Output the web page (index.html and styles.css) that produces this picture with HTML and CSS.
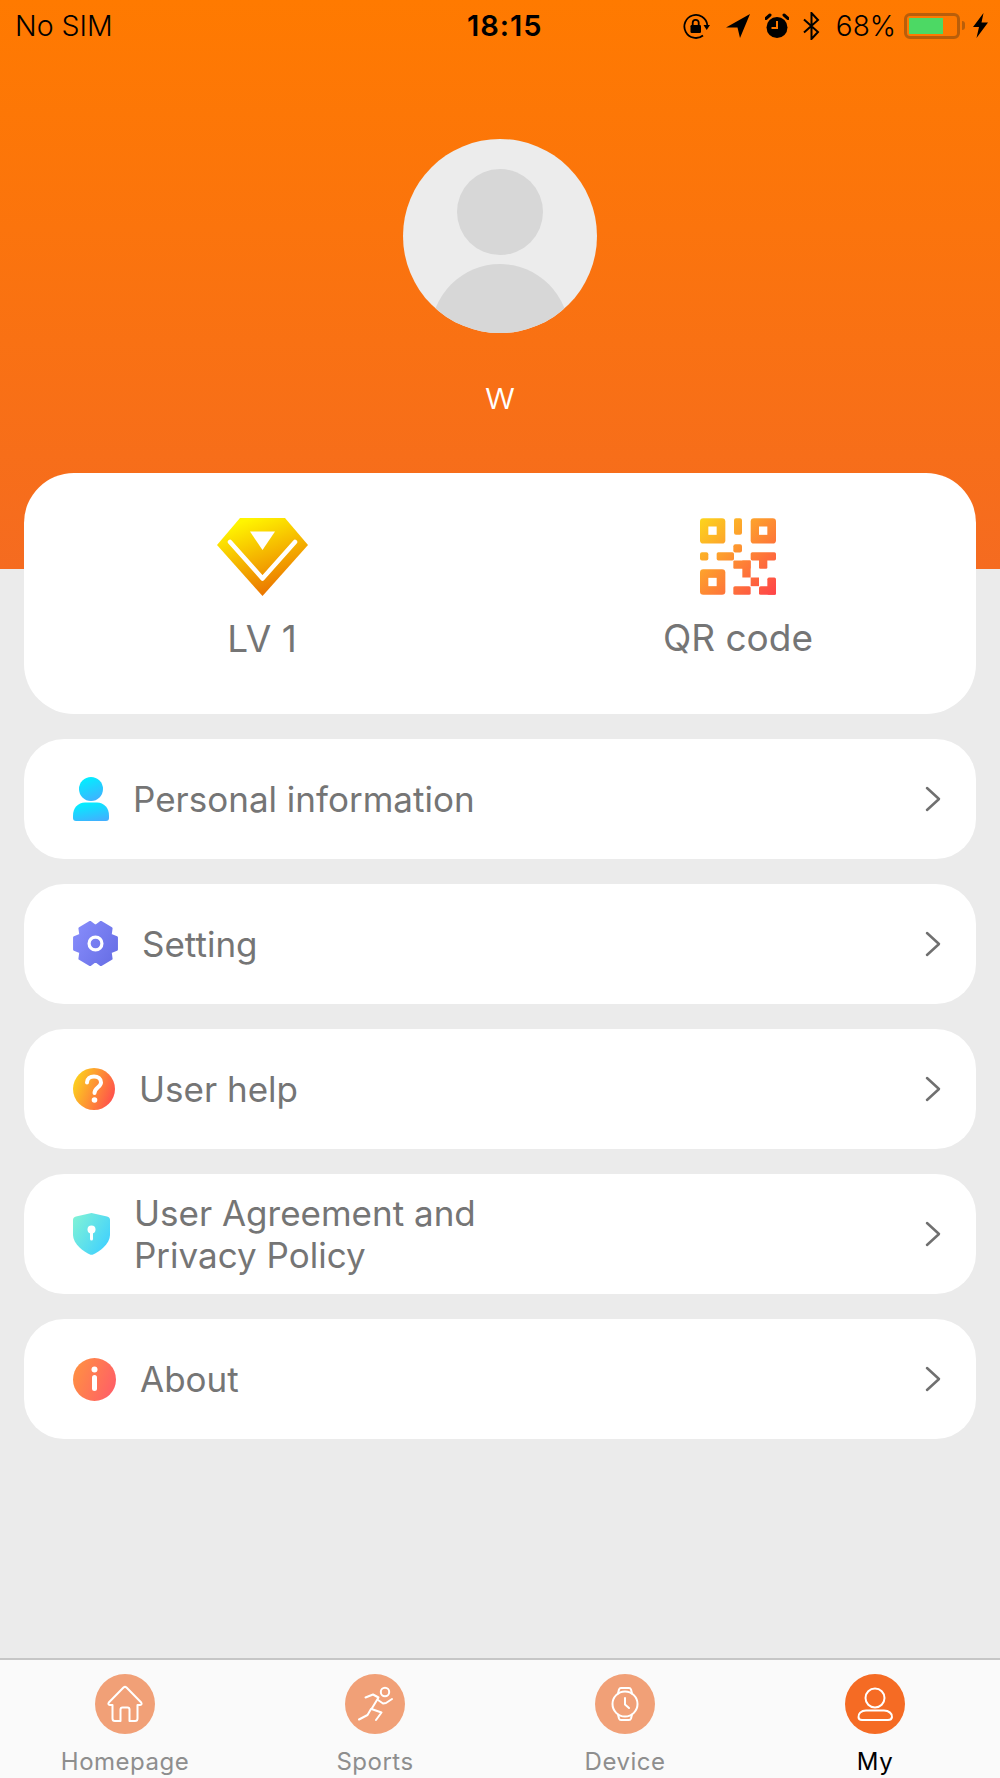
FILE: index.html
```html
<!DOCTYPE html>
<html lang="en">
<head>
    <meta charset="UTF-8">
    <meta name="viewport" content="width=device-width, initial-scale=1.0">
    <title>My</title>
    <link rel="stylesheet" href="styles.css">
</head>
<body>

    <svg class="defs" width="0" height="0" aria-hidden="true">
        <defs>
            <linearGradient id="grad-gem" x1="0.25" y1="0" x2="0.7" y2="1">
                <stop offset="0.05" stop-color="#fff500"/>
                <stop offset="1" stop-color="#e96a00"/>
            </linearGradient>
            <linearGradient id="grad-qr" gradientUnits="userSpaceOnUse" x1="0" y1="0" x2="228" y2="230">
                <stop offset="0" stop-color="#fcd51c"/>
                <stop offset="1" stop-color="#ff4349"/>
            </linearGradient>
            <linearGradient id="grad-person" x1="0.3" y1="0" x2="0.7" y2="1">
                <stop offset="0" stop-color="#00f0ff"/>
                <stop offset="1" stop-color="#41b0ff"/>
            </linearGradient>
            <linearGradient id="grad-gear" x1="0" y1="0.2" x2="1" y2="0.8">
                <stop offset="0" stop-color="#858bfa"/>
                <stop offset="1" stop-color="#686fe6"/>
            </linearGradient>
            <linearGradient id="grad-help" x1="0" y1="0.3" x2="1" y2="0.7">
                <stop offset="0" stop-color="#fcd31c"/>
                <stop offset="1" stop-color="#ff4d4d"/>
            </linearGradient>
            <linearGradient id="grad-shield" x1="0" y1="0.1" x2="1" y2="0.8">
                <stop offset="0" stop-color="#80f2d6"/>
                <stop offset="1" stop-color="#3fd0ff"/>
            </linearGradient>
            <linearGradient id="grad-info" x1="0" y1="0.3" x2="1" y2="0.7">
                <stop offset="0" stop-color="#ff8f43"/>
                <stop offset="1" stop-color="#ff5f67"/>
            </linearGradient>
            <clipPath id="avatar-clip"><circle cx="97" cy="97" r="97"/></clipPath>
        </defs>
    </svg>

    <header class="hero">
        <div class="status-bar">
            <span class="status-carrier">No SIM</span>
            <span class="status-time">18:15</span>
            <div class="status-right">
                <svg class="st-lock" width="27" height="26" viewBox="0 0 27 26">
                    <path d="M20 22.500A11.500 11.500 0 1 1 24.300 12" fill="none" stroke="#000" stroke-width="1.800"/>
                    <path d="M20.500 12L27 12 23.700 17z" fill="#000"/>
                    <rect x="7.500" y="12" width="10.500" height="8" rx="1.200" fill="#000"/>
                    <path d="M9.700 12.500V9.800a3 3 0 0 1 6 0V12.500" fill="none" stroke="#000" stroke-width="1.800"/>
                </svg>
                <svg class="st-arrow" width="24" height="24" viewBox="0 0 24 24"><path d="M24 0L0 13.500l11.500 0L14 24z" fill="#000"/></svg>
                <svg class="st-alarm" width="24" height="26" viewBox="0 0 24 26">
                    <circle cx="12" cy="14.500" r="10.500" fill="#000"/>
                    <path d="M12 8v7H6.500" fill="none" stroke="#ff7a00" stroke-width="2"/>
                    <path d="M1 5.500L5 2M23 5.500L19 2" stroke="#000" stroke-width="3" stroke-linecap="round"/>
                </svg>
                <svg class="st-bt" width="17" height="28" viewBox="0 0 17 28"><path d="M1 7.500L15 20 8.500 27V1L15 8 1 20.500" fill="none" stroke="#000" stroke-width="2"/></svg>
                <span class="status-pct">68%</span>
                <div class="battery">
                    <div class="battery-level"></div>
                </div>
                <div class="battery-nub"></div>
                <svg class="st-bolt" width="15" height="25" viewBox="0 0 15 25"><path d="M10.500 0L0 14h6L3.500 25 15 9.500H8.500z" fill="#000"/></svg>
            </div>
        </div>

        <svg class="avatar" width="194" height="194" viewBox="0 0 194 194">
            <circle cx="97" cy="97" r="97" fill="#ececec"/>
            <circle cx="97" cy="73" r="43" fill="#d7d7d7"/>
            <circle cx="97" cy="194" r="69" fill="#d7d7d7" clip-path="url(#avatar-clip)"/>
        </svg>
        <div class="user-name">w</div>
    </header>

    <main class="content">
        <section class="top-card">
            <div class="top-item">
                <svg width="91" height="78" viewBox="0 0 91 78">
                    <path d="M23 0H68L91 27 45.500 78 0 27z" fill="url(#grad-gem)"/>
                    <path d="M33 13.500H58L45.500 32z" fill="#fff"/>
                    <path d="M13 24L45.500 60.500 78 24" fill="none" stroke="#fff" stroke-width="4.500" stroke-linecap="round" stroke-linejoin="round"/>
                </svg>
                <span>LV 1</span>
            </div>
            <div class="top-item">
                <svg width="76" height="77" viewBox="0 0 228 230">
                    <g fill="url(#grad-qr)">
                        <rect x="0" y="0" width="76" height="76" rx="10"/>
                        <rect x="152" y="0" width="76" height="76" rx="10"/>
                        <rect x="0" y="153" width="76" height="77" rx="10"/>
                        <rect x="102" y="0" width="24" height="50" rx="6"/>
                        <rect x="100" y="78" width="26" height="25" rx="6"/>
                        <rect x="0" y="102" width="25" height="25" rx="6"/>
                        <rect x="50" y="102" width="52" height="25" rx="5"/>
                        <rect x="152" y="102" width="76" height="25" rx="5"/>
                        <rect x="100" y="127" width="52" height="25" rx="3"/>
                        <rect x="177" y="120" width="25" height="32" rx="4"/>
                        <rect x="127" y="127" width="25" height="51"/>
                        <rect x="152" y="178" width="25" height="26"/>
                        <rect x="100" y="204" width="52" height="26" rx="5"/>
                        <rect x="177" y="204" width="51" height="26" rx="5"/>
                        <rect x="202" y="178" width="26" height="52" rx="5"/>
                    </g>
                    <g fill="#fff">
                        <rect x="25" y="25" width="25" height="25"/>
                        <rect x="177" y="25" width="25" height="25"/>
                        <rect x="25" y="179" width="25" height="25"/>
                    </g>
                </svg>
                <span>QR code</span>
            </div>
        </section>

        <a class="menu-row">
            <svg width="36" height="44" viewBox="0 0 36 44">
                <circle cx="18" cy="12" r="12" fill="url(#grad-person)"/>
                <path d="M12 25.500H24C31 25.500 36 31 36 38.500V41Q36 44 33 44H3Q0 44 0 41V38.500C0 31 5 25.500 12 25.500Z" fill="url(#grad-person)"/>
            </svg>
            <span>Personal information</span>
            <svg class="chevron" width="16" height="26" viewBox="0 0 16 26"><path d="M2 2L14 13 2 24" fill="none" stroke="#707070" stroke-width="2.500" stroke-linecap="round" stroke-linejoin="round"/></svg>
        </a>

        <a class="menu-row">
            <svg width="45" height="45" viewBox="1 1 42 42">
                <path d="M41.700 16.340V27.660L35.860 30 36.700 36.200 26.960 41.900 22 38 17.040 41.900 7.300 36.200 8.140 30 2.300 27.660V16.340L8.140 14 7.300 7.800 17.040 2.100 22 6 26.960 2.100 36.700 7.800 35.860 14z" fill="url(#grad-gear)" stroke="url(#grad-gear)" stroke-width="2.500" stroke-linejoin="round"/>
                <circle cx="22" cy="22" r="6" fill="none" stroke="#fff" stroke-width="3"/>
            </svg>
            <span>Setting</span>
            <svg class="chevron" width="16" height="26" viewBox="0 0 16 26"><path d="M2 2L14 13 2 24" fill="none" stroke="#707070" stroke-width="2.500" stroke-linecap="round" stroke-linejoin="round"/></svg>
        </a>

        <a class="menu-row">
            <svg width="42" height="42" viewBox="0 0 42 42">
                <circle cx="21" cy="21" r="21" fill="url(#grad-help)"/>
                <path d="M14 14.500C14 10.500 17 8.500 21 8.500 25 8.500 28 10.800 28 14.500 28 19 21.500 19.500 21.500 25" fill="none" stroke="#fff" stroke-width="4" stroke-linecap="round"/>
                <circle cx="21.500" cy="32" r="2.800" fill="#fff"/>
            </svg>
            <span>User help</span>
            <svg class="chevron" width="16" height="26" viewBox="0 0 16 26"><path d="M2 2L14 13 2 24" fill="none" stroke="#707070" stroke-width="2.500" stroke-linecap="round" stroke-linejoin="round"/></svg>
        </a>

        <a class="menu-row">
            <svg width="37" height="42" viewBox="0 0 37 42">
                <path d="M18.500 0L34 3.500Q37 4.300 37 7V22C37 31 26 39 19.500 41.700Q18.500 42 17.500 41.700C11 39 0 31 0 22V7Q0 4.300 3 3.500z" fill="url(#grad-shield)"/>
                <circle cx="18.500" cy="16.500" r="4" fill="#fff"/>
                <rect x="17" y="17" width="3" height="10.500" rx="1.500" fill="#fff"/>
            </svg>
            <span>User Agreement and<br>Privacy Policy</span>
            <svg class="chevron" width="16" height="26" viewBox="0 0 16 26"><path d="M2 2L14 13 2 24" fill="none" stroke="#707070" stroke-width="2.500" stroke-linecap="round" stroke-linejoin="round"/></svg>
        </a>

        <a class="menu-row">
            <svg width="43" height="43" viewBox="0 0 43 43">
                <circle cx="21.500" cy="21.500" r="21.500" fill="url(#grad-info)"/>
                <circle cx="21.500" cy="11.500" r="3" fill="#fff"/>
                <rect x="19" y="17" width="5" height="16" rx="2.500" fill="#fff"/>
            </svg>
            <span>About</span>
            <svg class="chevron" width="16" height="26" viewBox="0 0 16 26"><path d="M2 2L14 13 2 24" fill="none" stroke="#707070" stroke-width="2.500" stroke-linecap="round" stroke-linejoin="round"/></svg>
        </a>
    </main>

    <nav class="tab-bar">
        <div class="tab">
            <div class="tab-icon">
                <svg width="60" height="60" viewBox="0 0 60 60"><path d="M28.500 13.500L13.800 28.500Q12.500 30.500 15 31H17.500V44.500Q17.500 47 20 47H25.500V35.500Q25.500 33.500 27.500 33.500H32.500Q34.500 33.500 34.500 35.500V47H40Q42.500 47 42.500 44.500V31H45Q47.500 30.500 46.200 28.500L31.500 13.500Q30 12.300 28.500 13.500Z"/></svg>
            </div>
            <span>Homepage</span>
        </div>
        <div class="tab">
            <div class="tab-icon">
                <svg width="60" height="60" viewBox="0 0 60 60">
                    <circle cx="40" cy="18" r="4.200"/>
                    <path d="M20.500 23.500L28 20.500 33.500 23.500 26.500 35 36.500 38.500 31 46"/>
                    <path d="M26 35L22.500 41 14 45.500"/>
                    <path d="M33 26L38 29.500 41 29 47 25"/>
                </svg>
            </div>
            <span>Sports</span>
        </div>
        <div class="tab">
            <div class="tab-icon">
                <svg width="60" height="60" viewBox="0 0 60 60">
                    <circle cx="30" cy="30" r="12.500"/>
                    <path d="M23 19.500L24 15.500Q24.500 14 26 14H34Q35.500 14 36 15.500L37 19.500"/>
                    <path d="M23 40.500L24 44.500Q24.500 46 26 46H34Q35.500 46 36 44.500L37 40.500"/>
                    <path d="M30 24V30.500L34 34"/>
                </svg>
            </div>
            <span>Device</span>
        </div>
        <div class="tab tab-active">
            <div class="tab-icon">
                <svg width="60" height="60" viewBox="0 0 60 60">
                    <circle cx="30" cy="24" r="9.500"/>
                    <path d="M21 36.500H39C44 36.500 47.500 40 47 43Q46.500 46 43 46H17Q13.500 46 13.500 43C13 40 16 36.500 21 36.500Z"/>
                </svg>
            </div>
            <span>My</span>
        </div>
    </nav>

</body>
</html>
```

FILE: styles.css
```css
* {
    box-sizing: border-box;
}

html, body {
    height: 100%;
}

body {
    margin: 0;
    height: 1778px;
    overflow: hidden;
    display: flex;
    flex-direction: column;
    background-color: #ebebeb;
    font-family: 'Inter', 'Liberation Sans', sans-serif;
    color: #757575;
}

.defs {
    position: absolute;
}

/* orange header */
.hero {
    height: 569px;
    flex-shrink: 0;
    display: flex;
    flex-direction: column;
    align-items: center;
    background: linear-gradient(#ff7a00, #f56b20);
}

.status-bar {
    width: 100%;
    height: 50px;
    padding: 1px 12px 0 15px;
    display: flex;
    align-items: center;
    color: #000;
    font-size: 28px;
}

.status-carrier {
    width: 452px;
    font-size: 28.500px;
    font-weight: 300;
}

.status-time {
    font-size: 29px;
    font-weight: 600;
    letter-spacing: 1px;
}

.status-right {
    margin-left: auto;
    display: flex;
    align-items: center;
}

.st-arrow {
    margin-left: 16px;
}

.st-alarm {
    margin-left: 15px;
}

.st-bt {
    margin-left: 14px;
}

.status-pct {
    margin-left: 16px;
    font-weight: 300;
}

.battery {
    width: 56px;
    height: 26px;
    margin-left: 8px;
    padding: 2px;
    border: 3px solid #b95e0a;
    border-radius: 6px;
}

.battery-level {
    width: 34px;
    height: 100%;
    background-color: #4cd964;
}

.battery-nub {
    width: 3px;
    height: 9px;
    margin-left: 2px;
    background-color: #b95e0a;
    border-radius: 0 3px 3px 0;
}

.st-bolt {
    margin-left: 8px;
}

.avatar {
    margin-top: 89px;
}

.user-name {
    margin-top: 44px;
    color: #fff;
    font-size: 38px;
    font-weight: 300;
    line-height: 36px;
}

/* cards */
.content {
    margin-top: -96px;
    padding: 0 24px;
    display: flex;
    flex-direction: column;
    gap: 24.600px;
    position: relative;
}

.top-card {
    height: 241px;
    display: flex;
    background-color: #fff;
    border-radius: 50px;
}

.top-item {
    flex: 1;
    padding-top: 45px;
    display: flex;
    flex-direction: column;
    align-items: center;
    gap: 21px;
    font-size: 37px;
    line-height: 44px;
}

.menu-row {
    height: 120.500px;
    padding: 0 35px 0 49px;
    display: flex;
    align-items: center;
    gap: 24px;
    background-color: #fff;
    border-radius: 40px;
    font-size: 35px;
    line-height: 42px;
}

.chevron {
    margin-left: auto;
}

/* bottom navigation */
.tab-bar {
    margin-top: auto;
    height: 120px;
    padding-top: 14px;
    display: flex;
    background-color: #fafafa;
    border-top: 2px solid #c6c6c6;
}

.tab {
    flex: 1;
    display: flex;
    flex-direction: column;
    align-items: center;
    gap: 13px;
    font-size: 24px;
    line-height: 30px;
    letter-spacing: 0.500px;
    color: #8e8e8e;
}

.tab-icon {
    width: 60px;
    height: 60px;
    border-radius: 50%;
    background-color: #f1a077;
}

.tab-icon svg {
    display: block;
    fill: none;
    stroke: #fff;
    stroke-width: 2;
    stroke-linecap: round;
    stroke-linejoin: round;
}

.tab-active {
    color: #000;
}

.tab-active .tab-icon {
    background-color: #f56b24;
}
```
